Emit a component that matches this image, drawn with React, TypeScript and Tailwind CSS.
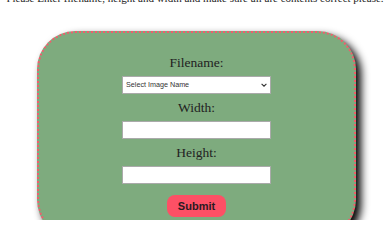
export default function App() {
  return (
    <div className="h-[220px] overflow-hidden bg-white font-['Liberation_Serif',serif] text-[#222]">
      <p className="-mt-[8px] h-[12px] whitespace-nowrap text-center text-[11px] leading-[12px] text-[#222]">
        Please Enter filename, height and width and make sure all are contents correct please.
      </p>
      <form
        onSubmit={(e) => e.preventDefault()}
        className="ml-[37px] mt-[27px] flex w-[319px] flex-col items-center rounded-[38px] border-2 border-dotted border-[#f25c6c] bg-[#7eab7e] pb-[19px] pt-[16px] shadow-[5px_5px_8px_#000]"
      >
        <label className="block h-[27px] text-center text-[13.5px] leading-[27px]">Filename:</label>
        <div className="relative h-[18px] w-[149px]">
          <select className="block h-[18px] w-full appearance-none border border-[#aaa] bg-white pl-[3px] font-['Liberation_Sans',sans-serif] text-[7.2px] text-[#333]">
            <option>Select Image Name</option>
          </select>
          <svg
            viewBox="0 0 10 6"
            className="pointer-events-none absolute right-[4px] top-[7px] h-[4px] w-[6px]"
          >
            <path d="M1 1l4 4 4-4" fill="none" stroke="#333" strokeWidth="1.8" />
          </svg>
        </div>
        <label className="block h-[27px] text-center text-[13.5px] leading-[27px]">Width:</label>
        <input type="text" className="block h-[18px] w-[149px] border border-[#aaa] bg-white" />
        <label className="block h-[27px] text-center text-[13.5px] leading-[27px]">Height:</label>
        <input type="text" className="block h-[18px] w-[149px] border border-[#aaa] bg-white" />
        <button
          type="submit"
          className="mt-[11px] h-[22px] w-[59px] rounded-[8px] bg-[#fd5065] font-['Liberation_Sans',sans-serif] text-[11px] font-bold text-[#2a1a22]"
        >
          Submit
        </button>
      </form>
    </div>
  );
}
